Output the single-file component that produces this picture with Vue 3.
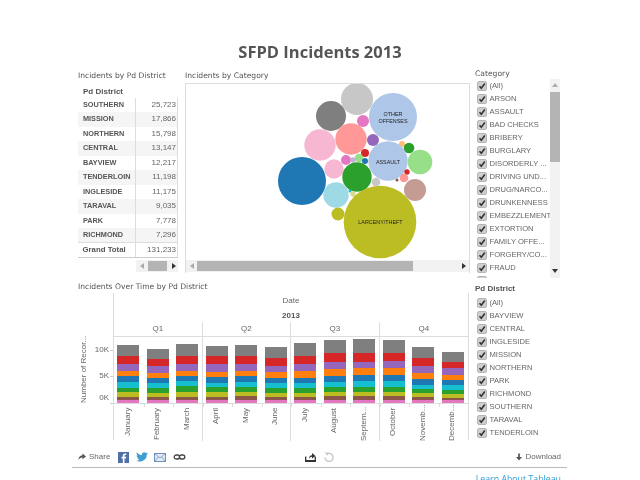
<script setup>
const districts = [
  ['SOUTHERN', '25,723'], ['MISSION', '17,866'], ['NORTHERN', '15,798'], ['CENTRAL', '13,147'],
  ['BAYVIEW', '12,217'], ['TENDERLOIN', '11,198'], ['INGLESIDE', '11,175'], ['TARAVAL', '9,035'],
  ['PARK', '7,778'], ['RICHMOND', '7,296'],
]
const categories = ['(All)', 'ARSON', 'ASSAULT', 'BAD CHECKS', 'BRIBERY', 'BURGLARY', 'DISORDERLY ...', 'DRIVING UND...', 'DRUG/NARCO...', 'DRUNKENNESS', 'EMBEZZLEMENT', 'EXTORTION', 'FAMILY OFFE...', 'FORGERY/CO...', 'FRAUD', 'GAMBLING']
const districtFilter = ['(All)', 'BAYVIEW', 'CENTRAL', 'INGLESIDE', 'MISSION', 'NORTHERN', 'PARK', 'RICHMOND', 'SOUTHERN', 'TARAVAL', 'TENDERLOIN']
const bubbles = [
  [357, 99, 16, '#c7c7c7'], [331, 116, 15, '#7f7f7f'], [393, 117, 24, '#aec7e8'], [363, 121, 6, '#e377c2'],
  [351, 139, 15.7, '#ff9896'], [320, 145, 15.7, '#f7b6d2'], [373, 140, 6, '#9467bd'], [402, 144, 3, '#ffbb78'],
  [409, 148, 5.3, '#2ca02c'], [365, 153, 4, '#d62728'], [359, 158, 4.3, '#98df8a'], [346, 160, 5, '#e377c2'],
  [353, 160, 2.7, '#c5b0d5'], [365, 161, 3, '#1f77b4'], [388, 161, 19.7, '#aec7e8'], [420, 162, 12.3, '#98df8a'],
  [334, 169, 9.7, '#f7b6d2'], [357, 177, 14.7, '#2ca02c'], [302, 181, 24, '#1f77b4'], [407, 172, 2.7, '#d62728'],
  [404, 178, 4.3, '#ff9896'], [397, 180, 1.5, '#8c564b'], [376, 182, 4.3, '#c7c7c7'], [415, 190, 11, '#c49c94'],
  [336, 195, 12.7, '#9edae5'], [350, 191, 1.5, '#17becf'], [353, 194, 2.7, '#dbdb8d'], [338, 214, 6.5, '#bcbd22'],
  [380, 222, 36.3, '#bcbd22'],
]
const colors = ['#7f7f7f', '#d62728', '#9467bd', '#ff7f0e', '#1f77b4', '#17becf', '#2ca02c', '#bcbd22', '#8c564b', '#e377c2']
const edges = [
  [210, 245, 267, 288, 305, 322, 339, 353, 366, 377, 385],
  [222, 253, 275, 294, 309, 324, 340, 356, 366, 377, 385],
  [207, 243, 267, 288, 303, 320, 335, 352, 366, 377, 385],
  [214, 245, 269, 292, 308, 325, 338, 352, 366, 377, 385],
  [210, 243, 267, 288, 303, 321, 336, 351, 363, 375, 385],
  [217, 251, 275, 292, 309, 325, 340, 356, 366, 377, 385],
  [205, 243, 268, 288, 310, 325, 340, 356, 366, 377, 385],
  [195, 236, 261, 284, 303, 321, 336, 351, 363, 375, 385],
  [192, 234, 261, 281, 301, 318, 336, 351, 363, 375, 385],
  [195, 234, 258, 281, 301, 318, 336, 351, 363, 375, 385],
  [217, 251, 275, 294, 314, 330, 342, 355, 368, 377, 385],
  [232, 262, 281, 301, 316, 331, 345, 357, 369, 377, 385],
]
const monthNames = ['January', 'February', 'March', 'April', 'May', 'June', 'July', 'August', 'Septem...', 'October', 'Novemb...', 'Decemb...']
const months = monthNames.map((name, m) => ({
  name,
  segs: colors.map((color, i) => ({ color, h: (edges[m][i + 1] - edges[m][i]) / 3 })),
}))
</script>

<template>
  <div class="page">
    <h1 class="title">SFPD Incidents 2013</h1>

    <div class="top">
      <section class="tablepane">
        <h2 class="cap">Incidents by Pd District</h2>
        <div class="thead">Pd District</div>
        <div class="table">
          <div v-for="(d, i) in districts" :key="d[0]" class="row" :class="{ alt: i % 2 === 1 }">
            <span class="dname">{{ d[0] }}</span><span class="dval">{{ d[1] }}</span>
          </div>
          <div class="row total"><span class="dname gt">Grand Total</span><span class="dval">131,233</span></div>
        </div>
        <div class="tscroll">
          <span class="arrow left faint"></span><span class="tthumb"></span><span class="arrow right"></span>
        </div>
      </section>

      <section class="bubblepane">
        <h2 class="cap">Incidents by Category</h2>
        <div class="bubblebox">
          <svg class="bubbles" width="283" height="176" viewBox="186 84 283 176">
            <circle v-for="(b, i) in bubbles" :key="i" :cx="b[0]" :cy="b[1]" :r="b[2]" :fill="b[3]" />
            <text x="393" y="116" class="blabel">OTHER</text>
            <text x="393" y="123" class="blabel">OFFENSES</text>
            <text x="388" y="163.5" class="blabel">ASSAULT</text>
            <text x="380.500" y="224" class="blabel">LARCENY/THEFT</text>
          </svg>
          <div class="hscroll">
            <span class="arrow left faint"></span><span class="hthumb"></span><span class="arrow right"></span>
          </div>
        </div>
      </section>

      <section class="filter catfilter">
        <h2 class="cap fcap">Category</h2>
        <div class="catbody">
          <div class="flist">
            <label v-for="c in categories" :key="c" class="fitem">
              <svg class="check" width="10" height="10" viewBox="0 0 10 10"><rect x="0.500" y="0.500" width="9" height="9" rx="1.500" fill="#cfcfcf" stroke="#b5b5b5" /><path d="M2.500 5.300 L4.300 7.300 L7.800 2.500" fill="none" stroke="#333" stroke-width="1.600" /></svg>
              <span>{{ c }}</span>
            </label>
          </div>
          <div class="vscroll">
            <span class="arrow up faint"></span><span class="vthumb"></span><span class="vgap"></span><span class="arrow down"></span>
          </div>
        </div>
      </section>
    </div>

    <div class="bottom">
      <section class="timepane">
        <h2 class="cap">Incidents Over Time by Pd District</h2>
        <div class="chart">
          <div class="yaxis">
            <div class="ytitle">Number of Recor...</div>
            <div class="yticks"><span>10K</span><span>5K</span><span>0K</span></div>
          </div>
          <div class="plotwrap">
            <div class="datehead"><div>Date</div><div class="year">2013</div></div>
            <div class="quarters"><div v-for="q in ['Q1', 'Q2', 'Q3', 'Q4']" :key="q" class="q">{{ q }}</div></div>
            <div class="plot">
              <div v-for="(m, i) in months" :key="m.name" class="cell" :class="{ qstart: i % 3 === 0 }">
                <div class="bar">
                  <div v-for="s in m.segs" :key="s.color" :style="{ height: s.h + 'px', background: s.color }"></div>
                </div>
              </div>
            </div>
            <div class="labels">
              <div v-for="(m, i) in months" :key="m.name" class="mcell" :class="{ qstart: i % 3 === 0 }"><span>{{ m.name }}</span></div>
            </div>
          </div>
        </div>
      </section>
      <section class="filter distfilter">
        <h2 class="cap fcap">Pd District</h2>
        <label v-for="c in districtFilter" :key="c" class="fitem">
          <svg class="check" width="10" height="10" viewBox="0 0 10 10"><rect x="0.500" y="0.500" width="9" height="9" rx="1.500" fill="#cfcfcf" stroke="#b5b5b5" /><path d="M2.500 5.300 L4.300 7.300 L7.800 2.500" fill="none" stroke="#333" stroke-width="1.600" /></svg>
          <span>{{ c }}</span>
        </label>
      </section>
    </div>

    <footer class="toolbar">
      <div class="share">
        <svg width="8" height="8" viewBox="0 0 9 8"><path d="M5 0 L9 3.300 L5 6.500 V4.500 C3 4.300 1.500 5.500 0.500 7.500 C0.500 4.500 2 2.300 5 2 Z" fill="#555" /></svg>
        <span class="sharetext">Share</span>
        <svg class="fb" width="11" height="11" viewBox="0 0 11 11"><rect width="11" height="11" fill="#4f6fa8" /><path d="M6.500 11 V6.500 H8 L8.300 4.800 H6.500 V3.800 C6.500 3.200 6.800 3 7.400 3 H8.300 V1.500 H7 C5.500 1.500 4.800 2.400 4.800 3.600 V4.800 H3.600 V6.500 H4.800 V11 Z" fill="#fff" /></svg>
        <svg class="tw" width="12" height="10" viewBox="0 0 12 10"><path d="M12 1.300 C11.500 1.500 11 1.700 10.600 1.700 C11.100 1.400 11.400 1 11.600 .4 C11.100 .7 10.600 .9 10.100 1 C9.100 0 7.500 0 6.500 1 C5.900 1.600 5.700 2.400 5.900 3.100 C3.900 3 2.200 2.100 .9 .5 C.3 1.600 .6 3 1.600 3.700 C1.200 3.700 .9 3.600 .5 3.400 C.5 4.600 1.400 5.600 2.500 5.800 C2.200 5.900 1.800 5.900 1.500 5.900 C1.800 6.900 2.700 7.500 3.800 7.600 C2.800 8.400 1.400 8.800 0 8.600 C3.500 10.800 10.800 9.500 10.800 2.600 C11.300 2.300 11.700 1.800 12 1.300 Z" fill="#3f9fd0" /></svg>
        <svg class="mail" width="12" height="9" viewBox="0 0 12 9"><rect x=".5" y=".5" width="11" height="8" fill="#e4ecf6" stroke="#6f8fbf" /><path d="M.5 .5 L6 5 L11.500 .5 M.5 8.500 L4.300 3.800 M11.500 8.500 L7.700 3.800" fill="none" stroke="#6f8fbf" stroke-width=".8" /></svg>
        <svg class="link" width="13" height="6" viewBox="0 0 12 6"><rect x=".7" y="1" width="5.400" height="4" rx="2" fill="none" stroke="#444" stroke-width="1.300" /><rect x="5.900" y="1" width="5.400" height="4" rx="2" fill="none" stroke="#444" stroke-width="1.300" /></svg>
      </div>
      <div class="mid">
        <svg width="11" height="10" viewBox="0 0 11 10"><path d="M.7 4.500 V9.300 H10.300 V4.500" fill="none" stroke="#333" stroke-width="1.300" /><path d="M4 7 C4 4.500 5 3.300 7 3.300 V1 L10.500 4 L7 6.500 V4.800 C5.500 4.800 4.700 5.500 4 7 Z" fill="#333" /><rect x="0" y="8" width="11" height="2" fill="#333" /></svg>
        <svg width="10" height="10" viewBox="0 0 10 10"><path d="M3 2 A4 4 0 1 1 1 5.500" fill="none" stroke="#c4c4c4" stroke-width="1.300" /><path d="M.8 .6 L4.300 .6 L3.400 3.800 Z" fill="#c4c4c4" /></svg>
      </div>
      <div class="download">
        <svg width="6" height="8" viewBox="0 0 7 8"><path d="M2.500 0 H4.500 V4 H7 L3.500 8 L0 4 H2.500 Z" fill="#555" /></svg>
        <span>Download</span>
      </div>
    </footer>
    <div class="learn">Learn About Tableau</div>
  </div>
</template>

<style scoped>
.page {
  width: 640px;
  height: 480px;
  overflow: hidden;
  background: #fff;
  font-family: "Open Sans", "Liberation Sans", sans-serif;
  color: #555;
  filter: blur(0.35px);
}
.title {
  margin: 0;
  height: 30px;
  padding-top: 40px;
  box-sizing: content-box;
  text-align: center;
  font: bold 16.5px/24px "Open Sans", sans-serif;
  color: #555;
}
.cap {
  margin: 0;
  height: 15px;
  font-family: "DejaVu Sans", sans-serif;
  font-size: 7.6px;
  font-weight: normal;
  line-height: 12px;
  color: #555;
  white-space: nowrap;
}
.top {
  display: flex;
  height: 208px;
  padding-left: 78px;
}
.tablepane { width: 100px; margin-right: 7px; }
.tablepane .cap { height: 14px; }
.thead {
  height: 14px;
  padding-left: 5px;
  font: bold 8px/16px "Liberation Sans", sans-serif;
  color: #555;
}
.table { border-bottom: 1px solid #ccc; }
.row {
  display: flex;
  height: 14.45px;
  font: 8px/14px "Liberation Sans", sans-serif;
}
.row.alt { background: #f5f5f5; }
.dname {
  box-sizing: border-box;
  width: 58px;
  padding-left: 5px;
  border-right: 1px solid #ddd;
  font-weight: bold;
  font-size: 7.3px;
  color: #555;
  white-space: nowrap;
}
.gt { font-size: 7.8px; padding-left: 4.500px; }
.dval {
  box-sizing: border-box;
  width: 42px;
  padding-right: 1px;
  text-align: right;
  border-right: 1px solid #ddd;
  color: #666;
}
.total { border-top: 1px solid #ddd; height: 13.5px; }
.tscroll {
  display: flex;
  align-items: center;
  margin: 2px 0 0 58px;
  height: 12px;
  background: #f2f2f2;
}
.tthumb { width: 19px; height: 10px; background: #b4b4b4; margin: 0 5px 0 4px; }
.arrow { display: block; width: 0; height: 0; flex: none; border: solid transparent; }
.arrow.left { border-width: 3px 4px 3px 0; border-right-color: #444; margin-left: 4px; }
.arrow.right { border-width: 3px 0 3px 4px; border-left-color: #333; }
.arrow.up { border-width: 0 3px 4px; border-bottom-color: #444; margin: 4px auto; }
.arrow.down { border-width: 4px 3px 0; border-top-color: #333; margin: 0 auto 5px; }
.faint { opacity: .4; }

.bubblepane { width: 285px; margin-right: 7px; }
.bubblepane .cap { height: 13px; }
.bubblebox {
  box-sizing: border-box;
  width: 285px;
  height: 190px;
  border: 1px solid #ddd;
  border-bottom: 0;
  overflow: hidden;
}
.bubbles { display: block; width: 283px; height: 176px; }
.blabel {
  font: 5.4px "Liberation Sans", sans-serif;
  fill: #222;
  text-anchor: middle;
}
.hscroll {
  display: flex;
  align-items: center;
  height: 12px;
  background: #f2f2f2;
}
.hthumb { width: 216px; height: 10px; background: #b4b4b4; margin: 0 49px 0 3px; }

.filter { width: 85px; }
.fcap { height: 13px; margin-left: -2px; }
.catfilter .fcap { margin-top: -2px; }
.catbody { display: flex; height: 199px; overflow: hidden; margin-top: -2px; }
.flist { width: 73px; }
.fitem {
  display: flex;
  align-items: center;
  height: 13px;
  font: 7.6px/13px "Liberation Sans", sans-serif;
  color: #666;
  white-space: nowrap;
}
.check { flex: none; margin-right: 2.500px; }
.vscroll {
  display: flex;
  flex-direction: column;
  width: 10px;
  background: #f2f2f2;
}
.vthumb { height: 70px; background: #b4b4b4; flex: none; margin-top: 1px; }
.vgap { flex: 1; }

.bottom {
  display: flex;
  height: 169px;
  padding-left: 78px;
}
.timepane { width: 392px; margin-right: 7px; }
.timepane .cap { height: 13px; margin-top: 2px; line-height: 14px; }
.chart { display: flex; height: 147px; }
.yaxis { width: 35px; display: flex; }
.ytitle {
  width: 12px;
  height: 100%;
  writing-mode: vertical-rl;
  transform: rotate(180deg);
  font: 8px/12px "Liberation Sans", sans-serif;
  text-align: left;
  padding-top: 37px;
  box-sizing: border-box;
  white-space: nowrap;
  color: #666;
}
.yticks {
  flex: 1;
  display: flex;
  flex-direction: column;
  align-items: flex-end;
  padding: 52px 4px 0 0;
  font: 8px/10px "Liberation Sans", sans-serif;
  color: #666;
}
.yticks span { position: relative; }
.yticks span::after {
  content: "";
  position: absolute;
  right: -4px;
  top: 5px;
  width: 3px;
  height: 1px;
  background: #ccc;
}
.yticks span:nth-child(1) { height: 26px; }
.yticks span:nth-child(2) { height: 22px; }
.yticks span:nth-child(3)::after { top: 10px; }
.plotwrap {
  width: 356px;
  border-left: 1px solid #ddd;
  border-right: 1px solid #ddd;
  box-sizing: border-box;
}
.datehead {
  height: 29px;
  text-align: center;
  font: 8px/15px "Liberation Sans", sans-serif;
  color: #666;
}
.year { font-weight: bold; color: #555; }
.quarters {
  display: grid;
  grid-template-columns: repeat(4, 1fr);
  height: 15px;
  border-bottom: 1px solid #ddd;
  box-sizing: border-box;
}
.q {
  text-align: center;
  font: 8px/14px "Liberation Sans", sans-serif;
  color: #666;
  border-right: 1px solid #ddd;
}
.q:last-child { border-right: 0; }
.plot {
  display: grid;
  grid-template-columns: repeat(12, 1fr);
  height: 67px;
  border-bottom: 1px solid #ddd;
  box-sizing: border-box;
}
.cell { display: flex; align-items: flex-end; justify-content: center; }
.cell.qstart:not(:first-child) { border-left: 1px solid #ddd; margin-left: -1px; }
.bar { width: 22px; margin-right: 1px; }
.labels {
  display: grid;
  grid-template-columns: repeat(12, 1fr);
  height: 36px;
}
.mcell {
  position: relative;
  display: flex;
  justify-content: center;
  padding-top: 4px;
  box-sizing: border-box;
}
.mcell::before {
  content: "";
  position: absolute;
  left: 0;
  top: 0;
  width: 1px;
  height: 3px;
  background: #ddd;
}
.mcell:first-child::before { display: none; }
.mcell.qstart:not(:first-child) { border-left: 1px solid #ddd; margin-left: -1px; }
.mcell span {
  display: block;
  writing-mode: vertical-rl;
  transform: rotate(180deg);
  font: 8px/12px "Liberation Sans", sans-serif;
  color: #666;
  text-align: end;
  white-space: nowrap;
  height: 33px;
  margin-right: 2px;
}

.distfilter .fcap {
  font: bold 8px/8px "Liberation Sans", sans-serif;
  height: 8px;
  margin-top: 7px;
  margin-bottom: 3px;
}

.toolbar {
  display: flex;
  align-items: center;
  box-sizing: border-box;
  margin: 0 73px 0 72px;
  height: 21px;
  padding: 0 6px 0 6px;
  border-bottom: 1px solid #bbb;
  font: 8px/10px "Liberation Sans", sans-serif;
  color: #666;
}
.share { display: flex; align-items: center; width: 227px; }
.sharetext { margin: 0 8px 0 3px; }
.fb { margin-right: 7px; }
.tw { margin-right: 6px; }
.mail { margin-right: 7px; }
.mid { display: flex; align-items: center; gap: 8px; }
.download { display: flex; align-items: center; gap: 3px; margin-left: auto; }
.learn {
  text-align: right;
  padding: 5px 79px 0 0;
  font: 8.8px/12px "Open Sans", sans-serif;
  color: #2b9bd6;
}
</style>
